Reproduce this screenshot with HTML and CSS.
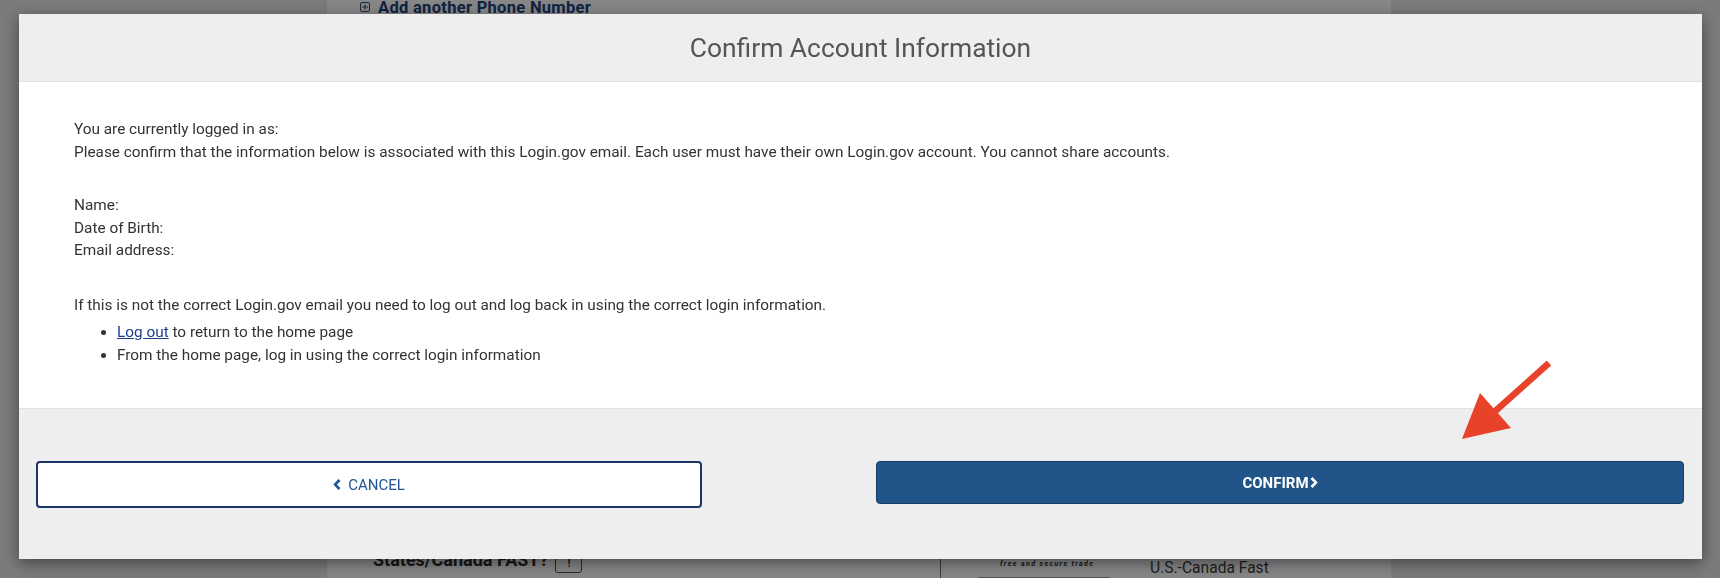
FILE: index.html
```html
<!DOCTYPE html>
<html lang="en">
<head>
<meta charset="utf-8">
<title>Confirm Account Information</title>
<link rel="stylesheet" href="styles.css">
</head>
<body>
  <div class="page">
    <div class="page-col">
      <div class="add-phone">
        <span class="plus-box">
          <svg viewBox="0 0 10 10" width="10" height="10"><rect x="0.5" y="0.5" width="9" height="9" rx="1.5" fill="none" stroke="#1b2a3f" stroke-width="1"/><path d="M5 2.2V7.8M2.2 5H7.8" stroke="#1b2a3f" stroke-width="1"/></svg>
        </span>
        <span>Add another Phone Number</span>
      </div>
      <div class="page-bottom">
        <div class="fast-q">States/Canada FAST? <span class="info">!</span></div>
        <div class="fast-card">
          <div class="fast-logo">
            <div class="logo-text">free and secure trade</div>
            <div class="logo-rule"></div>
          </div>
          <div class="fast-name">U.S.-Canada Fast</div>
        </div>
      </div>
    </div>
  </div>

  <div class="modal" role="dialog" aria-labelledby="modal-title">
    <div class="modal-header">
      <h2 id="modal-title" class="modal-title">Confirm Account Information</h2>
    </div>
    <div class="modal-body">
      <p class="intro">You are currently logged in as:<br>Please confirm that the information below is associated with this Login.gov email. Each user must have their own Login.gov account. You cannot share accounts.</p>
      <p class="details">Name:<br>Date of Birth:<br>Email address:</p>
      <p class="notice">If this is not the correct Login.gov email you need to log out and log back in using the correct login information.</p>
      <ul class="steps">
        <li><a href="#" class="link">Log out</a> to return to the home page</li>
        <li>From the home page, log in using the correct login information</li>
      </ul>
    </div>
    <div class="modal-footer">
      <button class="btn btn-cancel" type="button">
        <svg class="chev" viewBox="0 0 8 12" width="8" height="11"><polygon points="5.6,0 7.8,2.1 3.9,6 7.8,9.9 5.6,12 0,6" fill="currentColor"/></svg>
        <span>CANCEL</span>
      </button>
      <button class="btn btn-confirm" type="button">
        <span>CONFIRM</span><svg class="chev" viewBox="0 0 8 12" width="8" height="11"><polygon points="2.4,0 0.2,2.1 4.1,6 0.2,9.9 2.4,12 8,6" fill="currentColor"/></svg>
      </button>
    </div>
  </div>

  <svg class="annotation" viewBox="0 0 1720 578" width="1720" height="578" aria-hidden="true">
    <line x1="1549" y1="363" x2="1492" y2="414" stroke="#e8422b" stroke-width="6.5" stroke-linecap="butt"/>
    <polygon points="1462,439 1480,393 1511,428" fill="#e8422b"/>
  </svg>
</body>
</html>
```

FILE: styles.css
```css
* { box-sizing: border-box; }

html, body {
  margin: 0;
  padding: 0;
}

body {
  width: 1720px;
  height: 578px;
  overflow: hidden;
  background: #7b7b7b;
  font-family: Roboto, "Liberation Sans", Arial, sans-serif;
}

/* background page (dimmed behind the overlay) */
.page {
  height: 578px;
  display: flex;
  padding-left: 327px;
}

.page-col {
  width: 1064px;
  height: 578px;
  background: #878787;
  display: flex;
  flex-direction: column;
}

.add-phone {
  display: flex;
  align-items: center;
  gap: 8px;
  padding-left: 33px;
  margin-top: -2px;
  height: 18px;
  font-size: 16.5px;
  font-weight: 700;
  color: #0f2240;
  letter-spacing: 0.3px;
}

.plus-box {
  display: flex;
}

.page-bottom {
  margin-top: auto;
  height: 30px;
  display: flex;
  align-items: flex-start;
}

.fast-q {
  width: 613px;
  padding-left: 46px;
  padding-top: 1px;
  font-size: 18px;
  line-height: 22px;
  font-weight: 700;
  color: #161616;
  display: flex;
  align-items: flex-start;
  gap: 7px;
}

.info {
  display: inline-flex;
  align-items: center;
  justify-content: center;
  width: 27px;
  height: 19px;
  border: 1px solid #2a2a2a;
  border-radius: 3px;
  font-size: 11px;
  line-height: 1;
  margin-top: 5px;
}

.fast-card {
  height: 30px;
  border-left: 1px solid #3c3c3c;
  display: flex;
  align-items: flex-start;
}

.fast-logo {
  width: 170px;
  padding-left: 37px;
  padding-top: 12px;
}

.logo-text {
  font-size: 7px;
  font-style: italic;
  font-weight: 700;
  letter-spacing: 1.4px;
  color: #151515;
  padding-left: 22px;
  line-height: 8px;
}

.logo-rule {
  margin-top: 9px;
  width: 132px;
  border-top: 1px solid #555;
}

.fast-name {
  padding-top: 9px;
  padding-left: 39px;
  font-size: 15.6px;
  line-height: 22px;
  color: #1e1e1e;
}

/* modal */
.modal {
  position: fixed;
  top: 14px;
  left: 19px;
  width: 1683px;
  height: 545px;
  background: #fff;
  box-shadow: 0 4px 14px rgba(0, 0, 0, 0.45);
  display: flex;
  flex-direction: column;
}

.modal-header {
  height: 68px;
  background: #eeeeee;
  border-bottom: 1px solid #e2e2e2;
  display: flex;
  align-items: center;
  justify-content: center;
}

.modal-title {
  margin: 0;
  font-size: 26.4px;
  font-weight: 400;
  color: #555;
}

.modal-body {
  flex: 1;
  padding: 36px 55px 0 55px;
  font-size: 15.35px;
  line-height: 22.5px;
  color: #333;
}

.modal-body p {
  margin: 0;
}

.intro {
  margin-bottom: 31px !important;
}

.details {
  margin-bottom: 32px !important;
}

.steps {
  margin: 5px 0 0 0;
  padding-left: 43px;
}

.link {
  color: #1d3f8a;
  text-decoration: underline;
}

.modal-footer {
  height: 151px;
  background: #eeeeee;
  border-top: 1px solid #e2e2e2;
  padding: 52px 18px 0 17px;
  display: flex;
  justify-content: space-between;
  align-items: flex-start;
}

.btn {
  font-family: Roboto, "Liberation Sans", Arial, sans-serif;
  font-size: 15px;
  display: flex;
  align-items: center;
  justify-content: center;
  cursor: pointer;
  border-radius: 4px;
  padding: 0;
}

.btn-cancel {
  width: 666px;
  height: 47px;
  background: #fff;
  border: 2px solid #1c3568;
  color: #205493;
  gap: 7px;
}

.btn-confirm {
  width: 808px;
  height: 43px;
  background: #215589;
  border: 1px solid #173d66;
  color: #fff;
  font-weight: 700;
  gap: 1px;
}

.chev {
  display: block;
}

.annotation {
  position: fixed;
  top: 0;
  left: 0;
  pointer-events: none;
}
```
